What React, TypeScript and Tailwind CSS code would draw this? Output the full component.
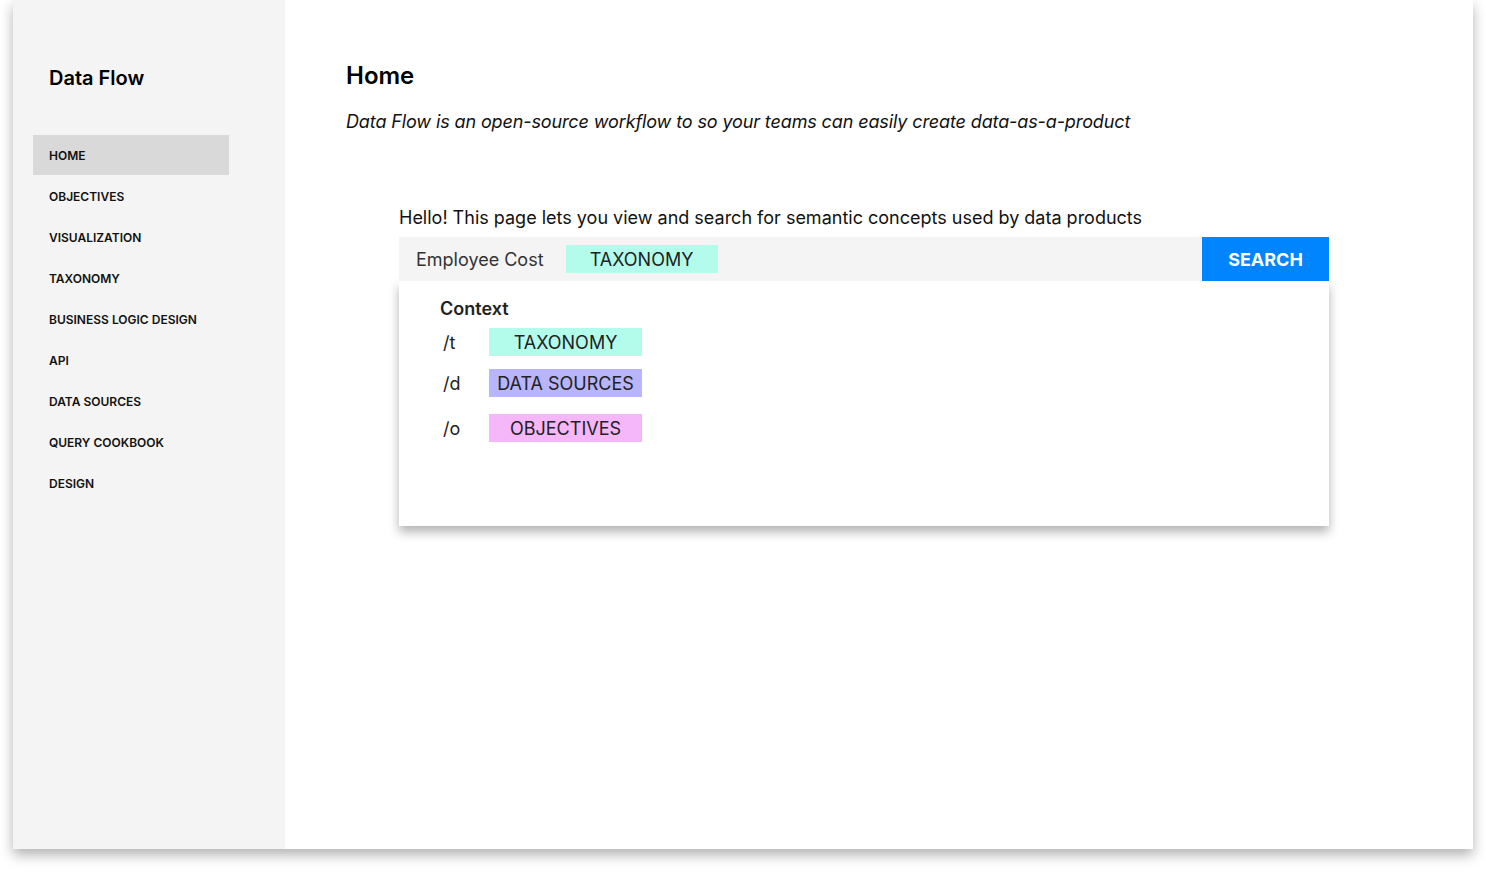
import React from "react";

const nav = [
  "HOME",
  "OBJECTIVES",
  "VISUALIZATION",
  "TAXONOMY",
  "BUSINESS LOGIC DESIGN",
  "API",
  "DATA SOURCES",
  "QUERY COOKBOOK",
  "DESIGN",
];

export default function App() {
  return (
    <div
      className="w-[1486px] h-[875px] bg-white pl-[13px] pr-[13px]"
      style={{ fontFamily: "Inter, 'Noto Sans', sans-serif" }}
    >
      <div className="w-[1460px] h-[849px] flex bg-white shadow-[0_6px_12px_rgba(0,0,0,0.3)]">
        <aside className="w-[272px] bg-[#f4f4f4] pt-[64px] pl-[20px]">
          <div className="pl-[16px] text-[20px] leading-[28px] font-semibold text-black">Data Flow</div>
          <nav className="mt-[43px] flex flex-col">
            {nav.map((n, i) => (
              <div
                key={n}
                className={
                  "w-[196px] flex items-center pl-[16px] pt-[2px] text-[12px] font-semibold text-[#111] " +
                  (i === 0 ? "bg-[#d9d9d9] h-[40px]" : "h-[41px]")
                }
              >
                {n}
              </div>
            ))}
          </nav>
        </aside>
        <main className="flex-1 pl-[61px] pt-[60px]">
          <h1 className="text-[24px] leading-[32px] font-semibold text-black">Home</h1>
          <p className="mt-[17px] text-[18px] leading-[26px] italic tracking-[-0.12px] text-[#111]">
            Data Flow is an open-source workflow to so your teams can easily create data-as-a-product
          </p>
          <div className="ml-[53px] mt-[70px] w-[930px]">
            <p className="text-[18px] leading-[26px] text-[#111]">
              Hello! This page lets you view and search for semantic concepts used by data products
            </p>
            <div className="mt-[6px] flex h-[44px]">
              <div className="flex-1 bg-[#f4f4f4] flex items-center pl-[17px]">
                <span className="text-[18px] text-[#333]">Employee Cost</span>
                <span className="ml-[22px] w-[152px] h-[28px] bg-[#b3fcec] flex items-center justify-center text-[18px] text-[#222]">
                  TAXONOMY
                </span>
              </div>
              <button className="w-[127px] bg-[#0085ff] text-white text-[18px] font-bold">SEARCH</button>
            </div>
            <div className="h-[245px] bg-white shadow-[0_6px_10px_rgba(0,0,0,0.3)] pl-[41px] pt-[16px]">
              <div className="text-[18px] leading-[24px] font-semibold text-[#222]">Context</div>
              <div className="mt-[7px] flex items-center h-[28px]">
                <span className="w-[49px] pl-[3px] text-[18px] text-[#222]">/t</span>
                <span className="w-[153px] h-[28px] bg-[#b3fcec] flex items-center justify-center text-[18px] text-[#222]">
                  TAXONOMY
                </span>
              </div>
              <div className="mt-[13px] flex items-center h-[28px]">
                <span className="w-[49px] pl-[3px] text-[18px] text-[#222]">/d</span>
                <span className="w-[153px] h-[28px] bg-[#b8b5fc] flex items-center justify-center text-[18px] text-[#222]">
                  DATA SOURCES
                </span>
              </div>
              <div className="mt-[17px] flex items-center h-[28px]">
                <span className="w-[49px] pl-[3px] text-[18px] text-[#222]">/o</span>
                <span className="w-[153px] h-[28px] bg-[#f6b6fa] flex items-center justify-center text-[18px] text-[#222]">
                  OBJECTIVES
                </span>
              </div>
            </div>
          </div>
        </main>
      </div>
    </div>
  );
}
